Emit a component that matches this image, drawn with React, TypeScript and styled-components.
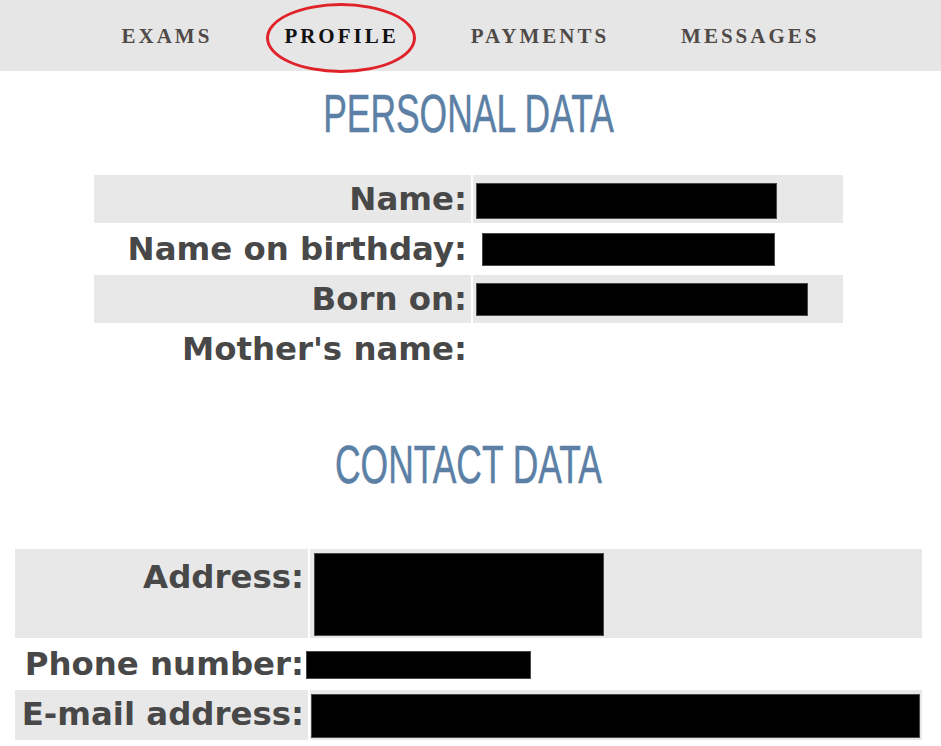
import React from "react";
import styled, { createGlobalStyle, css } from "styled-components";

const GlobalStyle = createGlobalStyle`
  body {
    margin: 0;
    background: #ffffff;
  }
`;

const Nav = styled.nav`
  height: 71px;
  background: #e6e6e6;
  display: flex;
  justify-content: center;
  gap: 72px;
`;

const NavItem = styled.a<{ $active?: boolean }>`
  position: relative;
  display: flex;
  align-items: center;
  padding-top: 2px;
  font-family: "Liberation Serif", "Times New Roman", serif;
  font-weight: bold;
  font-size: 21px;
  letter-spacing: 3px;
  color: ${({ $active }) => ($active ? "#111111" : "#4f4a47")};
  text-decoration: none;

  ${({ $active }) =>
    $active &&
    css`
      &::after {
        content: "";
        position: absolute;
        left: -18px;
        top: 3px;
        width: 150px;
        height: 70px;
        box-sizing: border-box;
        border: 3px solid #e0232a;
        border-radius: 50%;
        z-index: 2;
      }
    `}
`;

const Main = styled.main`
  padding-right: 4px;
`;

const Heading = styled.h2<{ $top: number; $bottom: number }>`
  margin: ${({ $top, $bottom }) => `${$top}px 0 ${$bottom}px`};
  font-family: "Liberation Sans", Arial, sans-serif;
  font-weight: normal;
  font-size: 54px;
  line-height: 60px;
  color: #5b7fa5;
  text-align: center;
  transform: scaleX(0.656);
  -webkit-text-stroke: 0.5px #5b7fa5;
`;

const DataTable = styled.table`
  margin: 0 auto;
  border-collapse: separate;
  border-spacing: 2px;
  table-layout: fixed;
  font-family: "DejaVu Sans", Verdana, sans-serif;
  font-size: 32.4px;
  font-weight: bold;
  color: #484848;
`;

const Row = styled.tr<{ $shaded?: boolean }>`
  & > td {
    background: ${({ $shaded }) => ($shaded ? "#e8e8e8" : "transparent")};
  }
`;

const Label = styled.td<{ $width: number; $padTop?: number }>`
  box-sizing: border-box;
  width: ${({ $width }) => $width}px;
  padding: ${({ $padTop = 5 }) => $padTop}px 4px 5px 4px;
  line-height: 38px;
  text-align: right;
  vertical-align: top;
  white-space: nowrap;
`;

const Value = styled.td<{ $width: number }>`
  box-sizing: border-box;
  width: ${({ $width }) => $width}px;
  padding: 0;
  vertical-align: top;
`;

const Redact = styled.span<{ $w: number; $h: number; $top: number; $left: number }>`
  display: block;
  box-sizing: border-box;
  width: ${({ $w }) => $w}px;
  height: ${({ $h }) => $h}px;
  margin: ${({ $top, $left }) => `${$top}px 0 2px ${$left}px`};
  background: #000000;
  border: 1px solid #4a4a4a;
`;

const navItems = ["EXAMS", "PROFILE", "PAYMENTS", "MESSAGES"];

export default function App() {
  return (
    <>
      <GlobalStyle />
      <Nav>
        {navItems.map((item) => (
          <NavItem key={item} href="#" $active={item === "PROFILE"}>
            {item}
          </NavItem>
        ))}
      </Nav>
      <Main>
        <Heading $top={12} $bottom={30}>
          PERSONAL DATA
        </Heading>
        <DataTable>
          <tbody>
            <Row $shaded>
              <Label $width={377}>Name:</Label>
              <Value $width={370}>
                <Redact $w={301} $h={36} $top={8} $left={3} />
              </Value>
            </Row>
            <Row>
              <Label $width={377}>Name on birthday:</Label>
              <Value $width={370}>
                <Redact $w={293} $h={33} $top={8} $left={9} />
              </Value>
            </Row>
            <Row $shaded>
              <Label $width={377}>Born on:</Label>
              <Value $width={370}>
                <Redact $w={332} $h={33} $top={8} $left={3} />
              </Value>
            </Row>
            <Row>
              <Label $width={377}>Mother's name:</Label>
              <Value $width={370} />
            </Row>
          </tbody>
        </DataTable>
        <Heading $top={59} $bottom={53}>
          CONTACT DATA
        </Heading>
        <DataTable>
          <tbody>
            <Row $shaded>
              <Label $width={293} $padTop={9}>
                Address:
              </Label>
              <Value $width={612}>
                <Redact $w={290} $h={83} $top={4} $left={4} />
              </Value>
            </Row>
            <Row>
              <Label $width={293}>Phone number:</Label>
              <Value $width={612}>
                <Redact $w={225} $h={28} $top={11} $left={-4} />
              </Value>
            </Row>
            <Row $shaded>
              <Label $width={293}>E-mail address:</Label>
              <Value $width={612}>
                <Redact $w={609} $h={44} $top={4} $left={1} />
              </Value>
            </Row>
          </tbody>
        </DataTable>
      </Main>
    </>
  );
}
